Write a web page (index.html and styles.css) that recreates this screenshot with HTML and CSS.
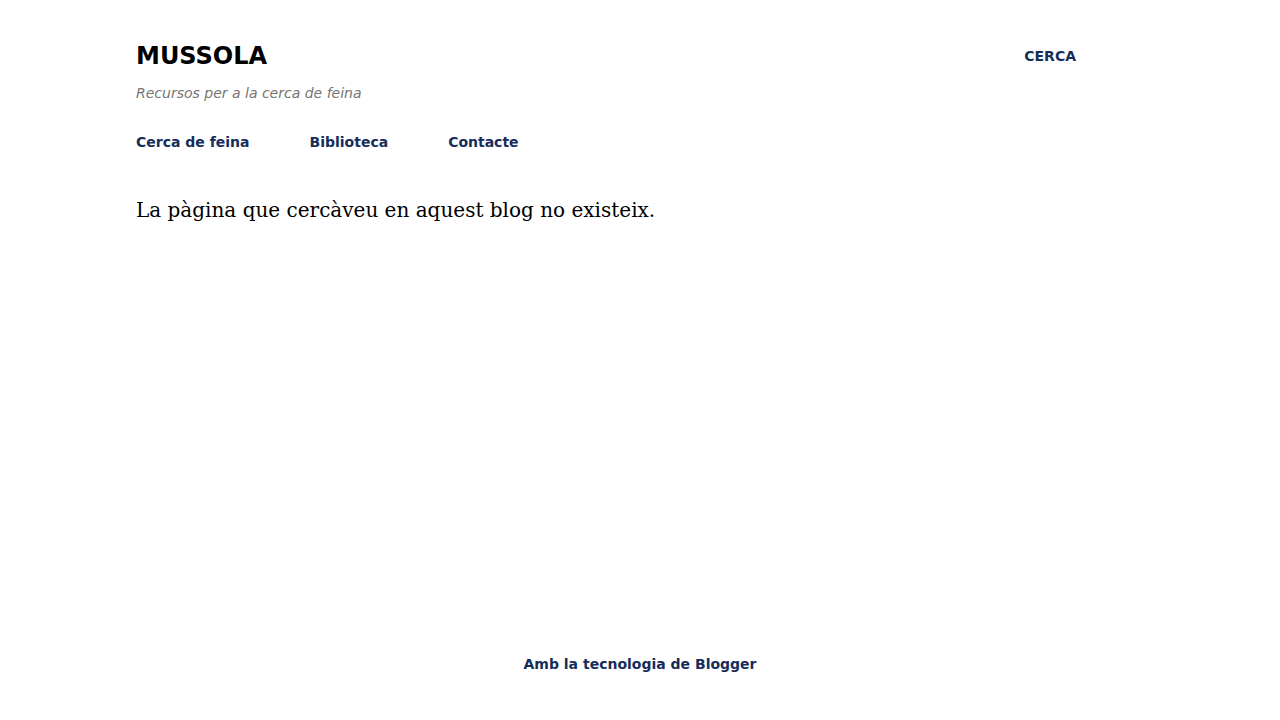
FILE: index.html
```html
<!DOCTYPE html>
<html lang="ca">
<head>
<meta charset="utf-8">
<title>Mussola</title>
<link rel="stylesheet" href="styles.css">
</head>
<body>
<div class="page">
  <header class="header">
    <div class="brand">
      <h1 class="title">MUSSOLA</h1>
      <p class="tagline">Recursos per a la cerca de feina</p>
    </div>
    <a class="search" href="#">CERCA</a>
  </header>
  <nav class="nav">
    <a href="#">Cerca de feina</a>
    <a href="#">Biblioteca</a>
    <a href="#">Contacte</a>
  </nav>
  <main class="main">
    <p class="message">La pàgina que cercàveu en aquest blog no existeix.</p>
  </main>
  <footer class="footer">
    <a href="#">Amb la tecnologia de Blogger</a>
  </footer>
</div>
</body>
</html>
```

FILE: styles.css
```css
html, body {
  margin: 0;
  padding: 0;
  background: #ffffff;
  font-family: "DejaVu Sans", sans-serif;
}
a {
  text-decoration: none;
  color: #162d5a;
}
.page {
  width: 1008px;
  margin: 0 auto;
  min-height: 720px;
  display: flex;
  flex-direction: column;
}
.header {
  display: flex;
  justify-content: space-between;
  align-items: flex-start;
  padding-top: 40px;
}
.title {
  margin: 0;
  font-size: 24px;
  line-height: 32px;
  font-weight: bold;
  color: #000;
}
.tagline {
  margin: 12px 0 0;
  font-size: 14px;
  line-height: 18px;
  font-style: italic;
  color: #757575;
}
.search {
  margin-top: 7px;
  margin-right: 68px;
  font-size: 14px;
  line-height: 18px;
  font-weight: bold;
}
.nav {
  display: flex;
  gap: 60px;
  margin-top: 31px;
}
.nav a {
  font-size: 14px;
  line-height: 18px;
  font-weight: bold;
}
.main {
  flex: 1;
  padding-top: 47px;
}
.message {
  margin: 0;
  font-family: "DejaVu Serif", serif;
  font-size: 20px;
  line-height: 24px;
  color: #000;
}
.footer {
  text-align: center;
  padding-bottom: 47px;
}
.footer a {
  font-size: 14px;
  line-height: 18px;
  font-weight: bold;
}
```
